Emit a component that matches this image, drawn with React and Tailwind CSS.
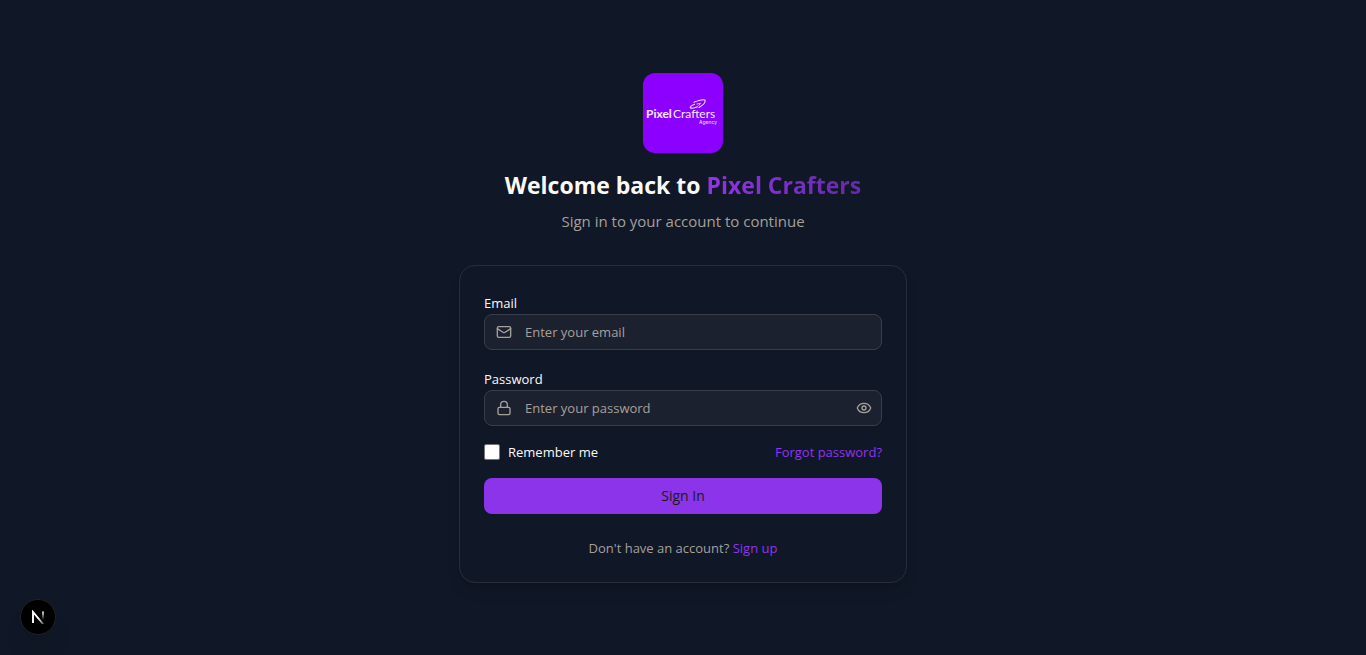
import { useState } from "react";
import { Mail, Lock, Eye, EyeOff } from "lucide-react";

function BrandLogo() {
  return (
    <svg
      viewBox="0 0 80 80"
      className="size-20 rounded-xl bg-[#8b00ff]"
      role="img"
      aria-label="PixelCrafters Agency"
    >
      <g fill="none" stroke="#f3e0ff" strokeLinecap="round" strokeLinejoin="round">
        <path d="M51 29.300C54.500 27.400 60 26.300 62 27C62.600 29.500 60 32.300 56 34.400" strokeWidth="1.100" />
        <path d="M51.500 31.300C48.500 32.500 46.800 33.900 47.300 34.700C48.500 35.600 52 34.900 54.500 33.800" strokeWidth="1.100" />
        <path d="M54 31L57.400 30.400L55.800 32.600" strokeWidth="0.900" />
      </g>
      <g fill="#f6eaff" fontSize="12" fontFamily="Lato, sans-serif">
        <text x="3" y="45" fontWeight="700">Pixel</text>
        <text x="30" y="45" fontWeight="400">Crafters</text>
      </g>
      <text x="56" y="51" fill="#e9ccff" fontSize="5" fontWeight="500" fontFamily="Inter, sans-serif">
        Agency
      </text>
    </svg>
  );
}

function DevBadge() {
  return (
    <button
      type="button"
      aria-label="Open developer tools"
      className="fixed bottom-5 left-5 flex size-9 items-center justify-center rounded-full border border-[#222226] bg-black shadow-xl"
    >
      <svg viewBox="0 0 14 14" className="size-[14px]" fill="none" aria-hidden="true">
        <defs>
          <linearGradient id="stem" x1="0" y1="1" x2="0" y2="10" gradientUnits="userSpaceOnUse">
            <stop stopColor="#fff" />
            <stop offset="1" stopColor="#fff" stopOpacity="0" />
          </linearGradient>
          <linearGradient id="slash" x1="8" y1="8" x2="13" y2="14" gradientUnits="userSpaceOnUse">
            <stop stopColor="#fff" />
            <stop offset="1" stopColor="#fff" stopOpacity="0.300" />
          </linearGradient>
        </defs>
        <path d="M2 13V2L12.500 14.500" stroke="url(#slash)" strokeWidth="1.900" />
        <path d="M12 1.500V10" stroke="url(#stem)" strokeWidth="1.800" />
      </svg>
    </button>
  );
}

const labelClass = "block pt-[2px] text-[13px] leading-[22px]";
const fieldClass =
  "h-9 w-full rounded-lg border border-[#393e4a] bg-[#1c212f] pl-10 text-[13px] text-white shadow-xs outline-none placeholder:text-[#a6a09b] focus:border-[#9333ea]";

export default function App() {
  const [visible, setVisible] = useState(false);

  return (
    <main className="flex min-h-screen flex-col items-center justify-center bg-[#101726] p-4 font-['Open_Sans','Noto_Sans',sans-serif] text-[#fafaf9]">
      <div className="w-full max-w-md">
        <header className="mb-8 flex flex-col items-center text-center">
          <BrandLogo />
          <h1 className="mt-4 mb-2 text-[23px] leading-8 font-bold">
            Welcome back to{" "}
            <span className="bg-linear-to-r from-[#9333ea] to-[#642ba6] bg-clip-text text-transparent">
              Pixel Crafters
            </span>
          </h1>
          <p className="text-[15px] leading-6 text-[#a6a09b]">Sign in to your account to continue</p>
        </header>

        <section className="rounded-2xl border border-[#272d3b] p-6 shadow-lg">
          <form className="flex flex-col gap-4" onSubmit={(e) => e.preventDefault()}>
            <div>
              <label htmlFor="email" className={labelClass}>Email</label>
              <div className="relative">
                <Mail className="absolute top-1/2 left-3 size-4 -translate-y-1/2 text-[#a6a09b]" />
                <input id="email" type="email" placeholder="Enter your email" className={fieldClass} />
              </div>
            </div>

            <div>
              <label htmlFor="password" className={labelClass}>Password</label>
              <div className="relative">
                <Lock className="absolute top-1/2 left-3 size-4 -translate-y-1/2 text-[#a6a09b]" />
                <input
                  id="password"
                  type={visible ? "text" : "password"}
                  placeholder="Enter your password"
                  className={fieldClass}
                />
                <button
                  type="button"
                  aria-label={visible ? "Hide password" : "Show password"}
                  onClick={() => setVisible(!visible)}
                  className="absolute inset-y-0 right-0 px-[10px] text-[#a6a09b]"
                >
                  {visible ? <EyeOff className="size-4" /> : <Eye className="size-4" />}
                </button>
              </div>
            </div>

            <div className="flex items-center justify-between text-[13px] leading-5">
              <label htmlFor="remember" className="flex items-center gap-2">
                <input
                  id="remember"
                  type="checkbox"
                  className="size-4 appearance-none rounded-xs border border-[#767676] bg-white checked:bg-[#9333ea]"
                />
                Remember me
              </label>
              <a href="#forgot" className="text-[#9333ea]">Forgot password?</a>
            </div>

            <button type="submit" className="h-9 rounded-lg bg-[#8b34ea] text-sm text-[#1c1917] shadow-xs">
              Sign In
            </button>
          </form>

          <p className="mt-6 text-center text-[13px] leading-5 text-[#a6a09b]">
            Don't have an account? <a href="#signup" className="text-[#9333ea]">Sign up</a>
          </p>
        </section>
      </div>
      <DevBadge />
    </main>
  );
}
